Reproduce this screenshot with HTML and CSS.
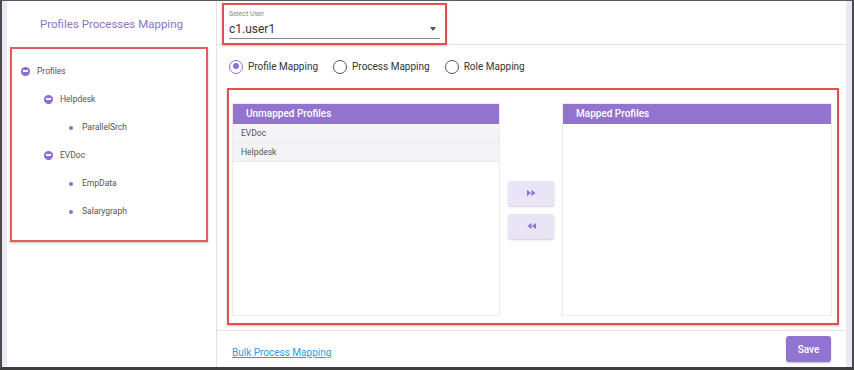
FILE: index.html
```html
<!DOCTYPE html>
<html lang="en">
<head>
    <meta charset="UTF-8">
    <meta name="viewport" content="width=device-width, initial-scale=1.0">
    <title>Profiles Processes Mapping</title>
    <link rel="stylesheet" href="styles.css">
</head>
<body>
    <div class="frame">
        <div class="sidebar">
            <h1 class="title">Profiles Processes Mapping</h1>
            <div class="tree-box">
                <ul class="tree">
                    <li>
                        <div class="node"><span class="toggle"></span>Profiles</div>
                        <ul>
                            <li>
                                <div class="node"><span class="toggle"></span>Helpdesk</div>
                                <ul>
                                    <li><div class="node"><span class="leaf"></span>ParallelSrch</div></li>
                                </ul>
                            </li>
                            <li>
                                <div class="node"><span class="toggle"></span>EVDoc</div>
                                <ul>
                                    <li><div class="node"><span class="leaf"></span>EmpData</div></li>
                                    <li><div class="node"><span class="leaf"></span>Salarygraph</div></li>
                                </ul>
                            </li>
                        </ul>
                    </li>
                </ul>
            </div>
        </div>

        <div class="main">
            <div class="top-bar">
                <div class="select-box">
                    <label class="select-label">Select User</label>
                    <div class="select-field">
                        <span>c1.user1</span>
                        <span class="caret"></span>
                    </div>
                </div>
            </div>

            <div class="radio-row">
                <label class="radio checked"><span class="dot"></span>Profile Mapping</label>
                <label class="radio"><span class="dot"></span>Process Mapping</label>
                <label class="radio"><span class="dot"></span>Role Mapping</label>
            </div>

            <div class="mapping-box">
                <div class="panel">
                    <div class="panel-head">Unmapped Profiles</div>
                    <div class="panel-row">EVDoc</div>
                    <div class="panel-row">Helpdesk</div>
                </div>

                <div class="move-buttons">
                    <button class="move-btn" title="Move right">
                        <svg width="9" height="6" viewBox="0 0 9 6"><path d="M0 0 L4 3 L0 6 Z M4.5 0 L8.5 3 L4.5 6 Z" fill="#8a6fd0"/></svg>
                    </button>
                    <button class="move-btn" title="Move left">
                        <svg width="9" height="6" viewBox="0 0 9 6"><path d="M9 0 L5 3 L9 6 Z M4.5 0 L0.5 3 L4.5 6 Z" fill="#8a6fd0"/></svg>
                    </button>
                </div>

                <div class="panel panel-wide">
                    <div class="panel-head">Mapped Profiles</div>
                </div>
            </div>

            <div class="footer">
                <a href="#" class="bulk-link">Bulk Process Mapping</a>
                <button class="save-btn">Save</button>
            </div>
        </div>
    </div>
</body>
</html>
```

FILE: styles.css
```css
* {
    box-sizing: border-box;
}
body {
    margin: 0;
    font-family: Roboto, "Liberation Sans", sans-serif;
    color: #333;
}
.frame {
    display: flex;
    width: 854px;
    height: 370px;
    background: #ebe7f3;
    border-left: 2px solid #4a4a4a;
    border-right: 2px solid #4a4a4a;
    border-top: 1px solid #5a5a5a;
    border-bottom: 3px solid #3f3f3f;
    padding: 0 6px 0 5px;
}
.sidebar {
    width: 210px;
    background: #fff;
    border-right: 1px solid #e2e2e2;
}
.title {
    margin: 0;
    height: 46px;
    line-height: 46px;
    text-align: center;
    font-size: 11.5px;
    font-weight: 400;
    color: #8c72c9;
}
.tree-box {
    margin: 0 0 0 3px;
    width: 198px;
    height: 195px;
    border: 2px solid #df5f5f;
    box-shadow: 0 1px 2px rgba(0, 0, 0, 0.25);
    padding: 8px 0 0 9px;
}
.tree, .tree ul {
    list-style: none;
    margin: 0;
    padding: 0;
}
.tree ul {
    padding-left: 23px;
}
.tree ul ul {
    padding-left: 22px;
}
.node {
    display: flex;
    align-items: center;
    height: 28px;
    font-size: 8.5px;
    color: #555;
}
.toggle, .leaf {
    position: relative;
    width: 9px;
    height: 9px;
    margin-right: 7px;
    flex: none;
}
.toggle {
    border-radius: 50%;
    background: #8c6fd1;
}
.toggle::after {
    content: "";
    position: absolute;
    left: 2px;
    top: 3.5px;
    width: 5px;
    height: 2px;
    background: #fff;
}
.leaf::after {
    content: "";
    position: absolute;
    left: 3px;
    top: 3px;
    width: 4px;
    height: 4px;
    border-radius: 50%;
    background: #8c6fd1;
}
.main {
    flex: 1;
    display: flex;
    flex-direction: column;
    background: #fff;
}
.top-bar {
    height: 44px;
    border-bottom: 1px solid #e4e4e4;
    padding: 2px 0 0 5px;
}
.select-box {
    width: 225px;
    height: 42px;
    border: 2px solid #df5050;
    box-shadow: 0 1px 2px rgba(0, 0, 0, 0.25);
    padding: 5px 5px 0 5px;
    background: #fff;
}
.select-label {
    display: block;
    font-size: 7px;
    color: #888;
    line-height: 9px;
}
.select-field {
    display: flex;
    justify-content: space-between;
    align-items: center;
    height: 20px;
    border-bottom: 1px solid #8a8a8a;
    font-size: 12px;
    color: #333;
    padding-right: 4px;
}
.caret {
    width: 0;
    height: 0;
    border-left: 3.5px solid transparent;
    border-right: 3.5px solid transparent;
    border-top: 4px solid #555;
}
.radio-row {
    height: 43px;
    display: flex;
    align-items: center;
    padding-left: 12px;
    gap: 15px;
}
.radio {
    display: flex;
    align-items: center;
    font-size: 10px;
    color: #333;
}
.radio .dot {
    width: 14px;
    height: 14px;
    border: 1.5px solid #555;
    border-radius: 50%;
    margin-right: 5px;
    position: relative;
}
.radio.checked .dot {
    border-color: #8c6fd1;
}
.radio.checked .dot::after {
    content: "";
    position: absolute;
    left: 2.5px;
    top: 2.5px;
    width: 6px;
    height: 6px;
    border-radius: 50%;
    background: #8c6fd1;
}
.mapping-box {
    margin-left: 10px;
    width: 612px;
    height: 237px;
    border: 2px solid #df5050;
    box-shadow: 0 1px 2px rgba(0, 0, 0, 0.25);
    padding: 13px 5px 7px 3px;
    display: flex;
    gap: 8px;
}
.panel {
    width: 268px;
    border: 1px solid #ececec;
    background: #fff;
}
.panel-wide {
    width: 270px;
}
.panel-head {
    height: 20px;
    line-height: 20px;
    background: #9273cf;
    color: #fff;
    font-size: 10px;
    font-weight: 500;
    padding-left: 13px;
}
.panel-row {
    height: 19px;
    line-height: 19px;
    background: #f4f4f6;
    border-bottom: 1px solid #e8e8ec;
    font-size: 8.5px;
    color: #555;
    padding-left: 8px;
}
.move-buttons {
    width: 46px;
    display: flex;
    flex-direction: column;
    justify-content: center;
    gap: 8px;
}
.move-btn {
    height: 25px;
    border: none;
    border-radius: 3px;
    background: #e9e4f6;
    box-shadow: 0 1px 2px rgba(0, 0, 0, 0.2);
    display: flex;
    align-items: center;
    justify-content: center;
    padding: 0;
}
.footer {
    margin-top: 5px;
    flex: 1;
    border-top: 1px solid #e4e4e4;
    display: flex;
    justify-content: space-between;
    align-items: center;
    padding: 0 15px 0 15px;
}
.bulk-link {
    font-size: 10px;
    color: #2f9be8;
    text-decoration: underline;
    margin-top: 6px;
}
.save-btn {
    width: 45px;
    height: 26px;
    border: none;
    border-radius: 3px;
    background: #9273cf;
    color: #fff;
    font-family: Roboto, "Liberation Sans", sans-serif;
    font-size: 10px;
    font-weight: 500;
    box-shadow: 0 1px 2px rgba(0, 0, 0, 0.25);
}
```
